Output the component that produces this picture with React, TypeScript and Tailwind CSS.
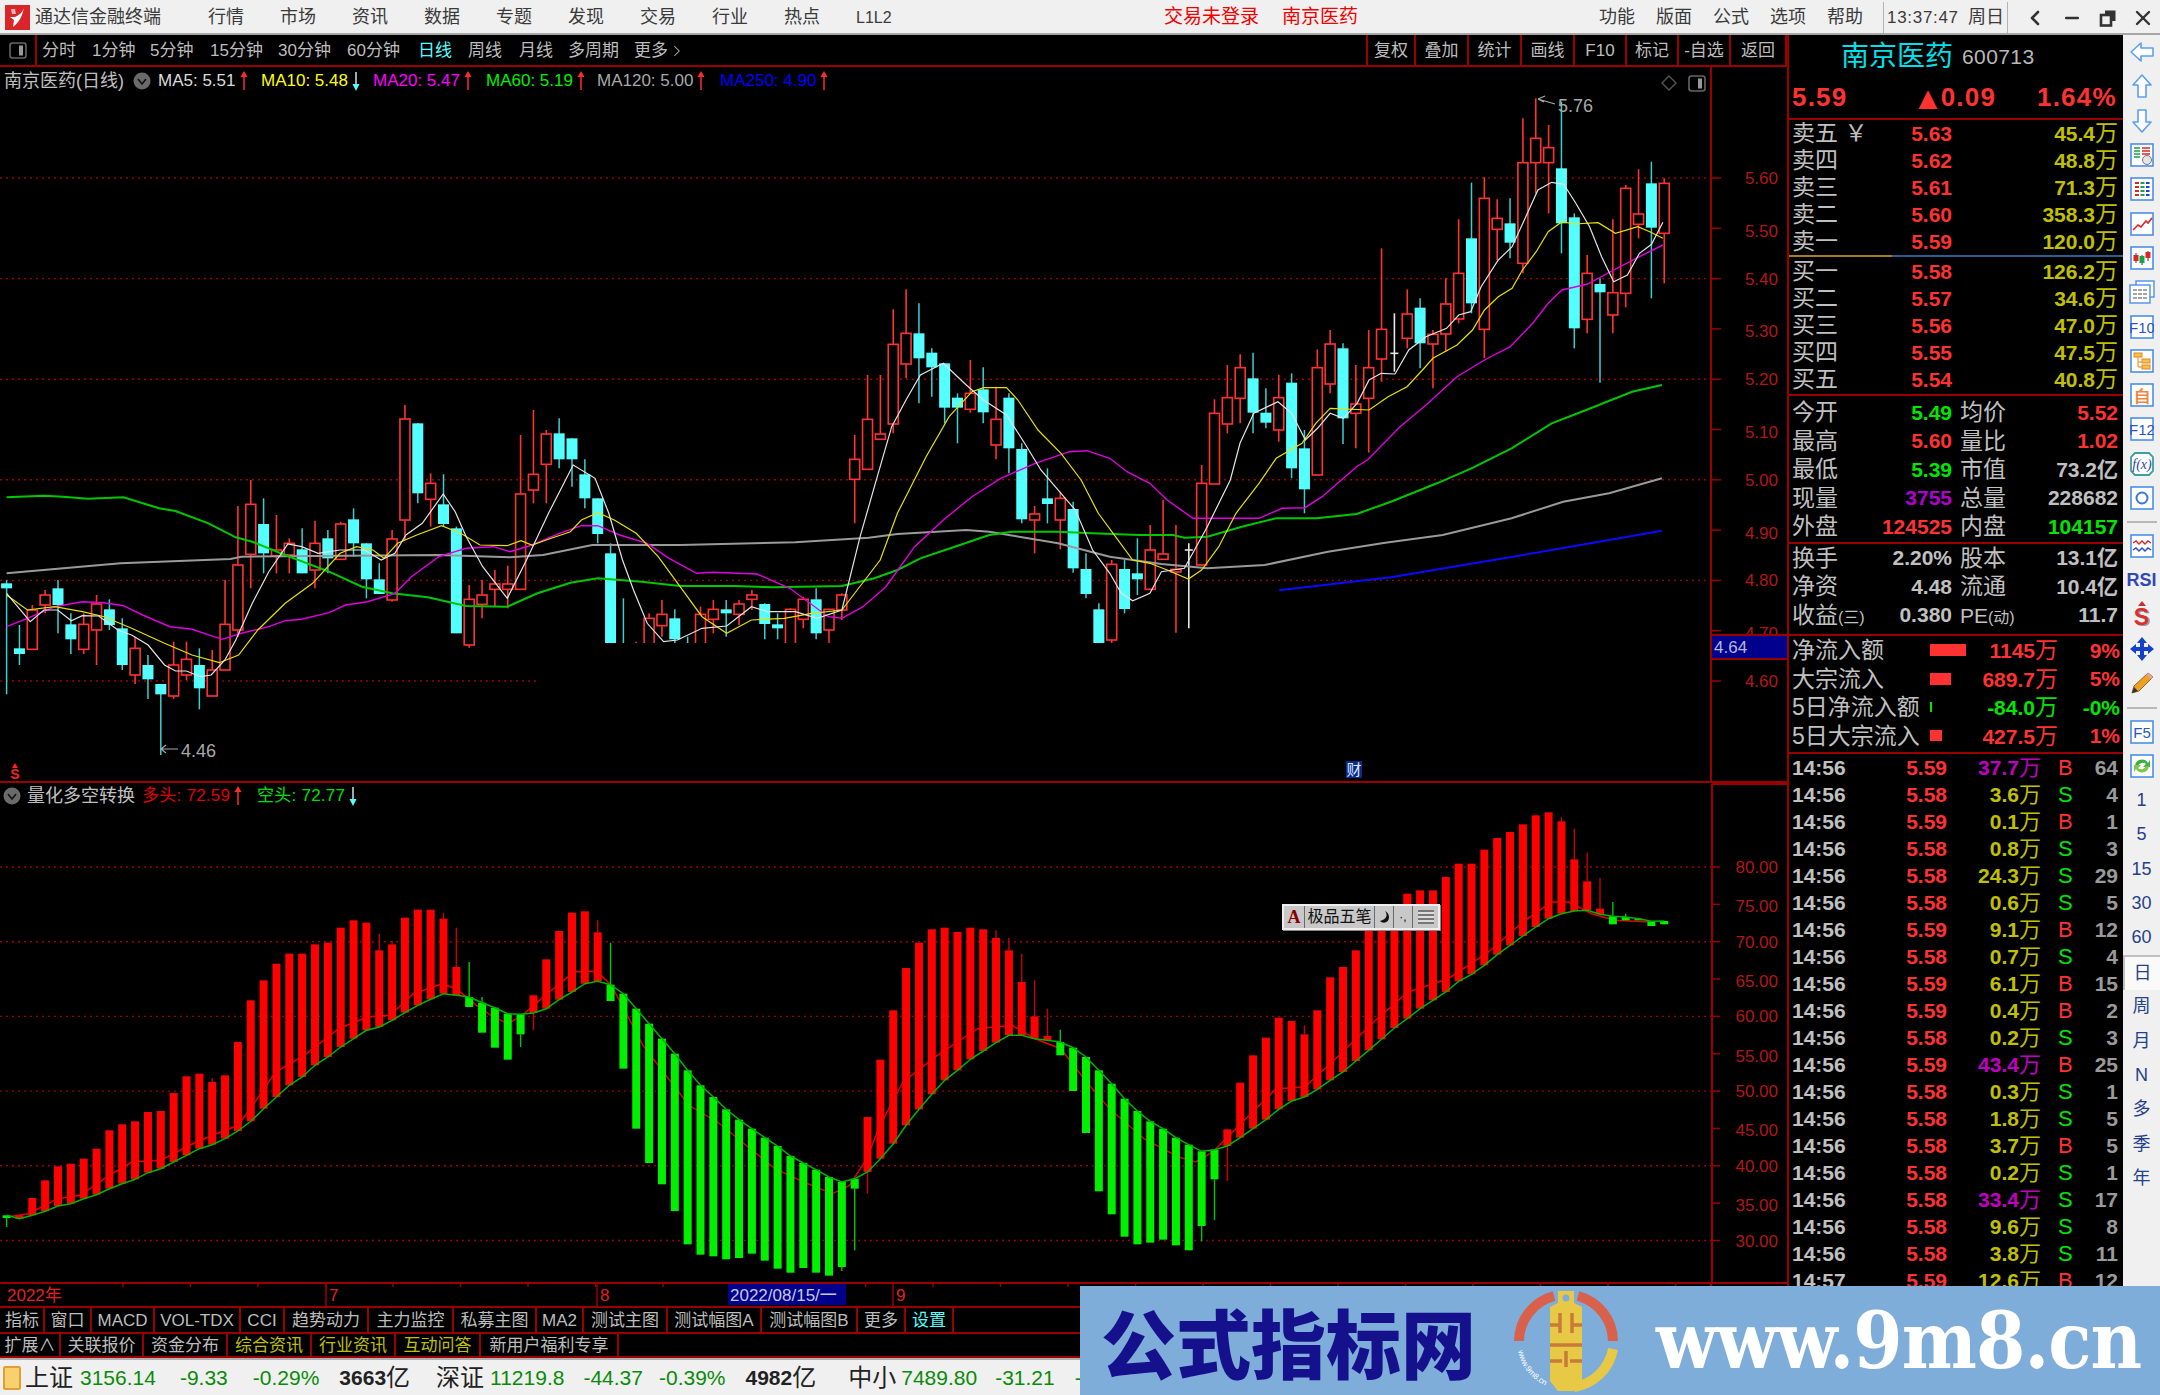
import { ChevronLeft, ChevronRight, Minus, X } from "lucide-react";
import type { ReactNode } from "react";

// zoom crops -> page coordinates
type Zoom = [number, number, number];
const Z7: Zoom = [0, 1568 / 860, 380];
const Z8: Zoom = [840, 1568 / 900, 260];
const Z9: Zoom = [1240, 1568 / 540, 60];
const Z10: Zoom = [0, 1568 / 900, 780];
const Z11: Zoom = [880, 1568 / 900, 780];

const line = (...parts: [Zoom, number[]][]) =>
  parts
    .map(([z, l]) => {
      const out: string[] = [];
      for (let i = 0; i < l.length; i += 2) {
        out.push(`${(z[0] + l[i] / z[1]).toFixed(1)},${(z[2] + l[i + 1] / 3).toFixed(1)}`);
      }
      return out.join(" ");
    })
    .join(" ");

const barX = (i: number) => 6.6 + 12.85 * i;

// [kind 1 up 0 down 2 doji, wick top, body top, body bottom, wick bottom]
const candlesA = [
  [0, 600, 610, 625, 943], [0, 735, 805, 822, 855], [1, 675, 690, 808, 808], [1, 630, 645, 675, 700], [0, 600, 625, 675, 760],
  [0, 700, 733, 778, 822], [1, 700, 733, 808, 822], [1, 645, 672, 750, 855], [0, 658, 688, 735, 750], [0, 715, 745, 855, 870],
  [1, 770, 805, 885, 912], [0, 825, 855, 898, 957], [0, 912, 912, 943, 1125], [1, 785, 855, 948, 957], [1, 785, 838, 885, 900],
  [0, 805, 855, 925, 988], [1, 810, 870, 948, 948], [1, 600, 733, 870, 870], [1, 378, 555, 750, 770], [1, 300, 373, 523, 625],
  [0, 355, 432, 520, 580], [1, 405, 510, 527, 580], [1, 475, 490, 525, 580], [0, 445, 508, 580, 580], [1, 422, 490, 570, 625],
  [0, 450, 475, 535, 580], [1, 425, 432, 538, 540], [0, 385, 418, 490, 530], [0, 490, 490, 598, 655], [0, 550, 598, 642, 640],
  [1, 450, 477, 660, 665], [1, 75, 117, 420, 480], [0, 130, 130, 340, 370], [1, 280, 310, 358, 440], [0, 283, 373, 432, 440],
  [0, 440, 445, 760, 760], [1, 615, 658, 795, 803], [1, 600, 645, 673, 715], [1, 570, 612, 628, 680], [1, 557, 612, 628, 685],
  [1, 165, 342, 628, 630], [1, 90, 283, 330, 370], [1, 150, 162, 253, 370], [0, 115, 160, 238, 265], [0, 175, 175, 238, 320],
  [0, 238, 283, 355, 385], [0, 355, 355, 462, 490], [0, 490, 520, 900, 900], [0, 655, 800, 880, 900], [1, 785, 800, 880, 900],
  [1, 700, 715, 800, 900], [1, 660, 703, 737, 770], [0, 688, 715, 778, 790], [0, 770, 790, 880, 900], [1, 680, 703, 800, 860],
  [1, 660, 688, 718, 760], [0, 660, 688, 700, 770], [1, 660, 672, 703, 735], [1, 630, 645, 658, 690], [0, 670, 672, 732, 778],
  [0, 700, 733, 745, 778], [1, 685, 688, 800, 800], [1, 650, 658, 718, 745], [0, 625, 658, 760, 778], [1, 690, 688, 750, 800],
  [1, 640, 645, 690, 720],
];
const candlesB = [
  [1, 525, 598, 658, 790], [1, 345, 478, 628, 630], [1, 345, 522, 538, 540], [1, 148, 253, 492, 520], [1, 88, 220, 312, 355],
  [0, 130, 220, 295, 430], [0, 265, 278, 322, 410], [0, 310, 310, 443, 490], [0, 400, 413, 443, 550], [1, 300, 400, 448, 458],
  [0, 322, 388, 457, 490], [1, 380, 478, 555, 598], [0, 400, 413, 565, 640], [0, 550, 567, 778, 790], [1, 738, 762, 780, 880],
  [0, 625, 715, 732, 790], [1, 695, 715, 780, 868], [0, 725, 747, 925, 938], [0, 880, 927, 1002, 1015], [0, 1030, 1048, 1240, 1240],
  [1, 900, 913, 1140, 1150], [0, 900, 927, 1047, 1060], [0, 835, 940, 958, 1005], [1, 795, 870, 988, 990], [1, 720, 882, 898, 900],
  [1, 795, 928, 936, 1118], [2, 850, 870, 870, 1105], [1, 615, 670, 915, 918], [1, 418, 460, 672, 672], [1, 315, 413, 492, 520],
  [1, 283, 323, 415, 490], [0, 278, 355, 458, 520], [0, 385, 458, 488, 505], [1, 345, 413, 510, 545], [0, 340, 368, 625, 655],
  [0, 510, 565, 688, 760], [1, 268, 323, 645, 645], [1, 210, 252, 372, 400], [0, 250, 265, 475, 552], [1, 315, 432, 460, 565],
  [1, 210, 323, 415, 578],
];
const candlesC = [
  [1, 565, 808, 897, 965], [2, 760, 880, 880, 935], [1, 688, 762, 835, 865], [0, 715, 743, 850, 925], [1, 810, 823, 852, 985],
  [1, 655, 732, 822, 875], [1, 478, 640, 777, 790], [0, 368, 535, 730, 760], [1, 352, 415, 808, 895], [1, 418, 475, 508, 600],
  [0, 415, 490, 548, 595], [1, 175, 308, 610, 640], [1, 115, 235, 308, 400], [1, 195, 263, 308, 460], [0, 125, 325, 490, 580],
  [0, 460, 472, 805, 865], [1, 585, 640, 778, 820], [0, 655, 672, 697, 968], [1, 478, 698, 765, 820], [1, 375, 385, 700, 742],
  [1, 328, 462, 493, 535], [0, 305, 370, 503, 715], [1, 355, 370, 520, 670],
];
const candles = [
  ...candlesA.map((c) => c.map((v, k) => (k ? 380 + v / 3 : v))),
  ...candlesB.map((c) => c.map((v, k) => (k ? 260 + v / 3 : v))),
  ...candlesC.map((c) => c.map((v, k) => (k ? 60 + v / 3 : v))),
];

const ma5 = line(
  [Z7, [12, 640, 55, 725, 80, 690, 105, 690, 130, 722, 150, 707, 180, 708, 215, 750, 240, 765, 270, 795, 300, 855, 320, 873, 340, 873, 365, 890, 385, 885, 410, 840, 430, 780, 460, 670, 490, 575, 525, 492, 550, 500, 580, 520, 620, 510, 665, 510, 695, 540, 720, 520, 740, 465, 770, 430, 808, 342, 830, 395, 850, 470, 880, 560, 925, 655, 960, 540, 1000, 400, 1045, 255, 1085, 295, 1110, 400, 1135, 540, 1155, 630, 1180, 730, 1210, 785, 1235, 780, 1280, 745, 1325, 738, 1370, 680, 1400, 695, 1450, 695, 1490, 715, 1535, 690]],
  [Z8, [35, 830, 60, 680, 90, 500, 115, 420, 140, 345, 180, 310, 220, 375, 250, 420, 290, 465, 320, 545, 350, 630, 385, 700, 410, 750, 440, 870, 470, 940, 490, 1000, 510, 1022, 540, 1000, 560, 935, 600, 925, 640, 800, 680, 660]],
  [Z9, [0, 1150, 40, 1060, 110, 1025, 150, 1060, 190, 1140, 225, 1105, 262, 1060, 300, 1075, 340, 1030, 375, 960, 410, 940, 450, 942, 490, 870, 540, 830, 600, 805, 635, 765, 670, 755, 700, 680, 750, 600, 790, 560, 830, 470, 865, 390, 905, 367, 940, 373, 975, 430, 1015, 500, 1050, 590, 1085, 665, 1125, 645, 1160, 580, 1195, 553, 1228, 487]],
);
const ma10 = line(
  [Z7, [12, 645, 50, 690, 100, 680, 150, 695, 190, 710, 240, 745, 300, 790, 350, 825, 400, 848, 435, 825, 470, 750, 520, 670, 570, 610, 620, 520, 650, 500, 680, 510, 700, 535, 725, 490, 760, 465, 805, 437, 840, 460, 875, 495, 925, 497, 950, 482, 970, 495, 1005, 475, 1040, 455, 1060, 420, 1090, 398, 1120, 420, 1160, 460, 1200, 530, 1240, 620, 1280, 710, 1325, 760, 1370, 720, 1430, 715, 1480, 700, 1535, 690]],
  [Z8, [30, 990, 70, 900, 100, 760, 150, 590, 190, 470, 230, 395, 250, 383, 290, 383, 310, 420, 345, 510, 385, 580, 420, 660, 450, 760, 480, 830, 510, 900, 540, 910, 570, 930, 607, 957, 630, 930, 660, 860, 690, 760, 730, 670]],
  [Z9, [105, 1195, 180, 1150, 220, 1090, 262, 1045, 375, 1050, 430, 1010, 485, 980, 530, 930, 560, 895, 630, 855, 675, 810, 710, 750, 750, 710, 790, 685, 820, 630, 860, 575, 895, 515, 935, 485, 970, 492, 1040, 488, 1090, 520, 1155, 500, 1190, 515, 1228, 535]],
);
const ma20 = line(
  [Z7, [12, 740, 50, 715, 100, 680, 150, 665, 190, 668, 225, 677, 260, 705, 310, 740, 350, 748, 405, 778, 440, 760, 490, 740, 520, 722, 550, 718, 600, 698, 630, 675, 670, 665, 720, 640, 750, 590, 800, 530, 850, 505, 900, 500, 930, 515, 970, 495, 1020, 460, 1060, 437, 1090, 437, 1130, 465, 1180, 490, 1220, 535, 1270, 580, 1300, 577, 1380, 582, 1440, 625, 1510, 710, 1535, 715]],
  [Z8, [40, 1040, 80, 980, 130, 860, 180, 780, 230, 710, 280, 655, 340, 610, 400, 575, 430, 572, 470, 595, 500, 635, 540, 670, 570, 720, 615, 775, 730, 775, 770, 745, 810, 743, 840, 710, 900, 620]],
  [Z9, [370, 1200, 465, 1100, 540, 1035, 630, 950, 710, 900, 785, 860, 850, 790, 895, 730, 935, 690, 1010, 672, 1085, 630, 1156, 592, 1228, 555]],
);
const ma60 = line(
  [Z7, [12, 352, 80, 347, 115, 350, 160, 356, 225, 352, 290, 385, 320, 393, 380, 430, 430, 472, 460, 485, 520, 525, 600, 575, 660, 620, 715, 640, 780, 652, 850, 678, 925, 680, 980, 640, 1040, 608, 1090, 595, 1170, 605, 1240, 618, 1340, 618, 1410, 622, 1535, 618]],
  [Z8, [60, 955, 100, 930, 140, 895, 200, 860, 260, 825, 300, 815, 380, 815, 440, 820, 520, 825, 580, 825, 600, 833, 640, 830, 700, 800, 760, 775, 830, 775, 900, 762, 960, 725, 1040, 670, 1100, 625, 1170, 565, 1240, 490, 1300, 450, 1380, 395, 1432, 375]],
);
const ma120 = line(
  [Z7, [12, 580, 100, 567, 220, 550, 420, 537, 440, 530, 800, 525, 930, 532, 990, 525, 1080, 495, 1240, 495, 1450, 487]],
  [Z8, [50, 833, 100, 822, 220, 810, 260, 815, 380, 850, 470, 890, 560, 912, 640, 925, 740, 915, 850, 875, 950, 848, 1050, 825, 1170, 775, 1260, 725, 1340, 700, 1432, 655]],
);
const ma250 = line([Z8, [765, 991, 960, 952, 1180, 888, 1300, 852, 1432, 812]]);

// [1 red 0 green, top, bottom, wick end or 0]
const bars = [
  [0, 1300, 1308, 1335], [1, 1300, 1310, 0], [1, 1248, 1300, 0], [1, 1195, 1288, 0], [1, 1153, 1272, 0], [1, 1145, 1265, 0], [1, 1130, 1250, 0], [1, 1100, 1238, 0],
  [1, 1045, 1220, 0], [1, 1027, 1205, 0], [1, 1018, 1192, 0], [1, 990, 1172, 0], [1, 987, 1160, 0], [1, 933, 1140, 0], [1, 883, 1120, 0], [1, 875, 1100, 0],
  [1, 900, 1088, 888], [1, 880, 1070, 0], [1, 780, 1047, 0], [1, 655, 1018, 0], [1, 595, 980, 0], [1, 545, 945, 0], [1, 515, 910, 0], [1, 515, 885, 0],
  [1, 487, 850, 0], [1, 482, 825, 0], [1, 437, 795, 0], [1, 415, 770, 0], [1, 422, 745, 432], [1, 505, 735, 455], [1, 487, 715, 478], [1, 407, 692, 0],
  [1, 383, 670, 0], [1, 383, 652, 0], [1, 410, 635, 392], [1, 555, 640, 437], [0, 645, 675, 540], [0, 662, 752, 645], [0, 677, 797, 0], [0, 695, 833, 0],
  [0, 697, 757, 795], [1, 640, 693, 745], [1, 532, 680, 0], [1, 447, 653, 0], [1, 392, 630, 0], [1, 388, 605, 0], [1, 451, 598, 415], [0, 608, 657, 482],
  [0, 635, 860, 0], [0, 680, 1040, 0], [0, 725, 1143, 0], [0, 770, 1207, 0], [0, 815, 1287, 0], [0, 865, 1387, 0], [0, 910, 1418, 0], [0, 945, 1423, 0],
  [0, 982, 1432, 0], [0, 1013, 1428, 0], [0, 1040, 1415, 0], [0, 1067, 1436, 0], [0, 1092, 1460, 0], [0, 1122, 1472, 0], [0, 1143, 1458, 0], [0, 1163, 1472, 0],
  [0, 1185, 1481, 0], [0, 1200, 1455, 1467], [0, 1190, 1220, 1405], [1, 1005, 1170, 1235], [1, 833, 1130, 0], [1, 685, 1085, 0], [1, 558, 1030, 0], [1, 482, 982, 0],
  [1, 442, 937, 0], [1, 437, 895, 0], [1, 450, 865, 0], [1, 437, 832, 0], [1, 442, 807, 0], [1, 468, 782, 445], [1, 505, 760, 468], [1, 600, 760, 515],
  [1, 703, 770, 595], [1, 762, 775, 680], [0, 780, 820, 743], [0, 797, 927, 0], [0, 825, 1053, 0], [0, 865, 1228, 0], [0, 905, 1297, 0], [0, 950, 1364, 0],
  [0, 987, 1387, 0], [0, 1018, 1382, 0], [0, 1040, 1373, 0], [0, 1067, 1390, 0], [0, 1088, 1405, 0], [0, 1108, 1332, 1378], [0, 1103, 1192, 1315], [1, 1042, 1092, 1197],
  [1, 902, 1067, 0], [1, 820, 1040, 0], [1, 767, 1013, 0], [1, 707, 982, 0], [1, 717, 957, 0], [1, 757, 945, 730], [1, 685, 922, 0], [1, 586, 895, 0],
  [1, 555, 870, 0], [1, 505, 837, 0], [1, 445, 805, 0], [1, 445, 772, 0], [1, 445, 738, 0], [1, 335, 710, 0], [1, 325, 680, 0], [1, 325, 655, 0],
  [1, 285, 630, 0], [1, 245, 598, 0], [1, 245, 577, 0], [1, 203, 550, 0], [1, 168, 518, 0], [1, 150, 490, 0], [1, 127, 462, 0], [1, 100, 435, 0],
  [1, 91, 410, 0], [1, 118, 395, 105], [1, 232, 387, 140], [1, 298, 385, 212], [1, 380, 397, 288], [0, 403, 427, 360], [0, 405, 415, 395], [0, 410, 415, 0],
  [0, 418, 432, 0], [0, 417, 427, 0],
];
const subY = (v: number) => 780 + v / 3;
const greenLine = bars.map((b, i) => `${barX(i).toFixed(1)},${subY(b[0] ? b[2] : b[1]).toFixed(1)}`).join(" ");
const redLine = line(
  [Z10, [12, 1305, 50, 1295, 100, 1250, 140, 1240, 190, 1180, 230, 1140, 280, 1135, 330, 1090, 370, 1060, 415, 1030, 440, 970, 480, 870, 530, 820, 590, 740, 640, 705, 680, 700, 720, 635, 770, 605, 795, 620, 830, 670, 860, 705, 885, 725, 910, 700, 950, 640, 1000, 570, 1040, 568, 1065, 610, 1090, 690, 1120, 790, 1160, 880, 1200, 970, 1250, 1020, 1300, 1090, 1350, 1160, 1400, 1200, 1450, 1235, 1480, 1210, 1510, 1130]],
  [Z11, [0, 1030, 40, 900, 100, 820, 170, 740, 230, 730, 270, 770, 315, 800, 360, 900, 400, 980, 460, 1070, 520, 1125, 550, 1140, 580, 1110, 620, 1040, 690, 920, 740, 915, 800, 820, 860, 720, 920, 630, 990, 590, 1060, 510, 1120, 420, 1170, 360, 1200, 360, 1240, 395, 1280, 415, 1340, 420]],
);

const NUM = "font-['Liberation_Sans',sans-serif]";
const AXIS_RED = "#b01818";
const LINE_RED = "#9a0000";

function Arrow({ up }: { up: boolean }) {
  return (
    <svg width="8" height="22" viewBox="0 0 8 22" className="shrink-0">
      {up ? (
        <>
          <line x1="4" y1="5" x2="4" y2="20" stroke="#ff2a2a" strokeWidth="1.5" />
          <path d="M0.5 7 L4 1 L7.5 7 Z" fill="#ff2a2a" />
        </>
      ) : (
        <>
          <line x1="4" y1="2" x2="4" y2="16" stroke="#c8e8e8" strokeWidth="1.5" />
          <path d="M0.5 14 L4 21 L7.5 14 Z" fill="#54ffff" />
        </>
      )}
    </svg>
  );
}

function RoundChevron() {
  return (
    <svg width="18" height="18" viewBox="0 0 18 18" className="shrink-0">
      <circle cx="9" cy="9" r="8.5" fill="#6a6a6a" />
      <path d="M5 7 L9 12 L13 7" fill="none" stroke="#111" strokeWidth="1.6" />
    </svg>
  );
}

function PanelToggle() {
  return (
    <svg width="18" height="17" viewBox="0 0 18 17">
      <rect x="1" y="1" width="16" height="15" rx="2.5" fill="none" stroke="#666" strokeWidth="1.6" />
      <rect x="10" y="3.5" width="4" height="10" fill="#999" />
    </svg>
  );
}

function TitleBar() {
  const menu = ["行情", "市场", "资讯", "数据", "专题", "发现", "交易", "行业", "热点"];
  return (
    <div className="flex h-[35px] shrink-0 items-center whitespace-nowrap border-b-2 border-[#a6a6a6] bg-[#f0f0f0] pt-[2px] text-[18px] text-[#3a3a3a]">
      <svg width="25" height="25" viewBox="0 0 25 25" className="ml-[5px] shrink-0">
        <rect width="25" height="25" fill="#d8262a" />
        <path d="M19 3 C17 8 14 10 10 12 L5 12 L9 15 L8 22 C12 19 15 15 17 10 Z" fill="#fff" />
        <path d="M6 4 L10 4 L11 9 L7 9 Z" fill="#f6b3b3" />
      </svg>
      <span className="ml-[5px] w-[126px] shrink-0">通达信金融终端</span>
      <div className="ml-[47px] flex shrink-0 gap-[36px]">
        {menu.map((m) => (
          <span key={m} className="w-[36px]">
            {m}
          </span>
        ))}
        <span className={`w-[36px] text-[16px] leading-[27px] ${NUM}`}>L1L2</span>
      </div>
      <span className="ml-[272px] w-[95px] shrink-0 text-[19px] text-[#f00000]">交易未登录</span>
      <span className="ml-[23px] w-[77px] shrink-0 text-[19px] text-[#f00000]">南京医药</span>
      <div className="ml-[240px] flex shrink-0 gap-[21px]">
        {["功能", "版面", "公式", "选项", "帮助"].map((m) => (
          <span key={m} className="w-[36px]">
            {m}
          </span>
        ))}
      </div>
      <div className="ml-[20px] flex h-full w-[125px] shrink-0 items-center border-x border-[#b4b4b4] pl-[3px]">
        <span className={`w-[81px] shrink-0 text-[17px] tracking-[0.7px] ${NUM}`}>13:37:47</span>
        <span className="shrink-0">周日</span>
      </div>
      <div className="ml-[15px] flex shrink-0 items-center text-[#333]">
        <ChevronLeft size={24} strokeWidth={2.6} />
        <Minus size={20} strokeWidth={3} className="ml-[15px]" />
        <svg width="18" height="18" viewBox="0 0 18 18" className="ml-[17px]">
          <path d="M6 1.5 H16.5 V12 H13 V5 H6 Z" fill="#333" />
          <rect x="2" y="6" width="10" height="10.5" fill="none" stroke="#333" strokeWidth="2.6" />
        </svg>
        <X size={24} strokeWidth={2.4} className="ml-[14px]" />
      </div>
    </div>
  );
}

function PeriodTabs() {
  const left: [string, string][] = [
    ["分时", "w-[50px]"],
    ["1分钟", "w-[58px]"],
    ["5分钟", "w-[60px]"],
    ["15分钟", "w-[68px]"],
    ["30分钟", "w-[69px]"],
    ["60分钟", "w-[71px]"],
    ["日线", "w-[50px] text-[#54ffff]"],
    ["周线", "w-[51px]"],
    ["月线", "w-[49px]"],
    ["多周期", "w-[66px]"],
  ];
  const right: [string, string][] = [
    ["复权", "w-[50px]"],
    ["叠加", "w-[53px]"],
    ["统计", "w-[53px]"],
    ["画线", "w-[53px]"],
    ["F10", "w-[52px]"],
    ["标记", "w-[52px]"],
    ["-自选", "w-[52px]"],
    ["返回", "w-[56px] border-r-0"],
  ];
  return (
    <div className="flex h-[32px] shrink-0 border-b-2 border-[#9a0000] text-[17px] text-[#bdbdbd]">
      <div className="flex w-[37px] items-center justify-center border-r-2 border-[#9a0000]">
        <PanelToggle />
      </div>
      <div className="ml-[5px] flex items-center pt-[2px]">
        {left.map(([t, c]) => (
          <span key={t} className={c}>
            {t}
          </span>
        ))}
        <span className="flex items-center">
          更多
          <ChevronRight size={18} strokeWidth={1.4} />
        </span>
      </div>
      <div className="ml-auto flex">
        {right.map(([t, c]) => (
          <span key={t} className={`flex items-center justify-center border-r-2 border-[#9a0000] pt-[1px] first:border-l-2 ${c}`}>
            {t}
          </span>
        ))}
      </div>
    </div>
  );
}

function MainChart() {
  const grid = [178, 278.6, 379.2, 479.8, 580.4, 681];
  const ticks = Array.from({ length: 11 }, (_, i) => 178 + i * 50.3);
  const labels = ["5.60", "5.50", "5.40", "5.30", "5.20", "5.10", "5.00", "4.90", "4.80", "4.70", "4.60"];
  return (
    <svg width="1787" height="714" viewBox="0 67 1787 714" className="block">
      {grid.map((y) => (
        <line key={y} x1="0" y1={y} x2="1711" y2={y} stroke="#a00000" strokeWidth="1.4" strokeDasharray="2 4" />
      ))}
      {candles.map((c, i) => {
        const x = barX(i);
        if (c[0] === 2) {
          return (
            <g key={i} stroke="#e8e8e8" strokeWidth="1.6">
              <line x1={x} y1={c[1]} x2={x} y2={c[4]} />
              <line x1={x - 4} y1={c[2]} x2={x + 4} y2={c[2]} />
            </g>
          );
        }
        if (c[0] === 1) {
          return (
            <g key={i} stroke="#ff3232" strokeWidth="1.6" fill="#000">
              <line x1={x} y1={c[1]} x2={x} y2={c[2]} />
              <line x1={x} y1={c[3]} x2={x} y2={c[4]} />
              <rect x={x - 5} y={c[2]} width="10" height={Math.max(c[3] - c[2], 1)} />
            </g>
          );
        }
        return (
          <g key={i}>
            <line x1={x} y1={c[1]} x2={x} y2={c[4]} stroke="#3ccfcf" strokeWidth="1.5" />
            <rect x={x - 5.5} y={c[2]} width="11" height={Math.max(c[3] - c[2], 1)} fill="#54ffff" />
          </g>
        );
      })}
      <polyline points={ma120} fill="none" stroke="#9a9a9a" strokeWidth="2" />
      <polyline points={ma250} fill="none" stroke="#0a0aff" strokeWidth="2" />
      <polyline points={ma60} fill="none" stroke="#00c800" strokeWidth="2" />
      <polyline points={ma20} fill="none" stroke="#e000e0" strokeWidth="1.4" />
      <polyline points={ma10} fill="none" stroke="#e8e000" strokeWidth="1.2" />
      <polyline points={ma5} fill="none" stroke="#e4e4e4" strokeWidth="1.2" />
      {/* the lower part of the plot is blanked out in the reference */}
      <rect x="537" y="643" width="1170" height="135" fill="#000" />

      <path d="M1538 99 L1545 96 M1538 99 L1544 102 M1538 99 L1555 104" stroke="#aaa" strokeWidth="1.2" fill="none" />
      <text x="1558" y="112" fontSize="18" fill="#a8a8a8" className={NUM}>
        5.76
      </text>
      <path d="M161 749 L166 745 M161 749 L166 753 M161 749 L178 749" stroke="#aaa" strokeWidth="1.2" fill="none" />
      <text x="181" y="757" fontSize="18" fill="#a8a8a8" className={NUM}>
        4.46
      </text>
      <path d="M15 763 L18 768 L12 768 Z" fill="#ff2020" />
      <text x="15" y="779" fontSize="14" fontWeight="700" fill="#ff2020" textAnchor="middle" className={NUM}>
        S
      </text>
      <rect x="1346" y="761" width="16" height="17" fill="#0a2a8a" />
      <text x="1354" y="775" fontSize="15" fill="#dfe8ff" textAnchor="middle">
        财
      </text>

      <line x1="1711" y1="67" x2="1711" y2="781" stroke={LINE_RED} strokeWidth="2" />
      {ticks.map((y) => (
        <line key={y} x1="1711" y1={y} x2="1721" y2={y} stroke={LINE_RED} strokeWidth="1.5" />
      ))}
      {labels.map((l, i) => (
        <text key={l} x="1778" y={ticks[i] + 6 + (i % 2 ? 2.5 : 0)} fontSize="17" fill={AXIS_RED} textAnchor="end" className={NUM}>
          {l}
        </text>
      ))}
      <rect x="1712" y="635" width="75" height="24" fill="#00008c" />
      <line x1="1712" y1="635" x2="1787" y2="635" stroke={LINE_RED} strokeWidth="2" />
      <line x1="1712" y1="659" x2="1787" y2="659" stroke={LINE_RED} strokeWidth="2" />
      <text x="1714" y="653" fontSize="17" fill="#b8b8d8" className={NUM}>
        4.64
      </text>
    </svg>
  );
}

function SubChart() {
  const grid = [865, 939.7, 1014.4, 1089.1, 1163.8, 1238.5];
  const ticks = Array.from({ length: 11 }, (_, i) => 865 + i * 37.35);
  const labels = ["80.00", "75.00", "70.00", "65.00", "60.00", "55.00", "50.00", "45.00", "40.00", "35.00", "30.00"];
  return (
    <svg width="1787" height="501" viewBox="0 781 1787 501" className="block">
      {grid.map((y) => (
        <line key={y} x1="0" y1={y} x2="1711" y2={y} stroke="#a00000" strokeWidth="1.4" strokeDasharray="2 4" />
      ))}
      <polyline points={redLine} fill="none" stroke="#e00000" strokeWidth="1.5" />
      {bars.map((b, i) => {
        const x = barX(i);
        const color = b[0] ? "#ff0000" : "#00f000";
        const top = subY(b[1]);
        const bottom = subY(b[2]);
        return (
          <g key={i}>
            {b[3] > 0 && (
              <line
                x1={x}
                x2={x}
                y1={b[3] < b[1] ? subY(b[3]) : bottom}
                y2={b[3] < b[1] ? top : subY(b[3])}
                stroke={b[0] ? "#c80000" : "#00c800"}
                strokeWidth="1.4"
              />
            )}
            <rect x={x - 4} y={top} width="8" height={bottom - top} fill={color} />
          </g>
        );
      })}
      <polyline points={greenLine} fill="none" stroke="#00b400" strokeWidth="1.5" />
      <line x1="1712" y1="782" x2="1712" y2="1282" stroke={LINE_RED} strokeWidth="2" />
      <line x1="1712" y1="782" x2="1787" y2="782" stroke={LINE_RED} strokeWidth="2" />
      {ticks.map((y) => (
        <line key={y} x1="1712" y1={y} x2="1720" y2={y} stroke={LINE_RED} strokeWidth="1.5" />
      ))}
      {labels.map((l, i) => (
        <text key={l} x="1778" y={Math.round(ticks[i]) + 6 + (i % 2 ? 2 : 0)} fontSize="17" fill={AXIS_RED} textAnchor="end" className={NUM}>
          {l}
        </text>
      ))}
    </svg>
  );
}

function DateAxis() {
  const ticks = Array.from({ length: 24 }, (_, i) => 123 + i * 67.5);
  const marks: [number, string][] = [
    [326, "7"],
    [597, "8"],
    [893, "9"],
  ];
  return (
    <svg width="1787" height="24" viewBox="0 1282 1787 24" className="block">
      {ticks.map((x) => (
        <line key={x} x1={x} y1="1283" x2={x} y2="1287" stroke={LINE_RED} strokeWidth="1.5" />
      ))}
      <text x="7" y="1301" fontSize="17" fill="#e02020" className="font-['Liberation_Sans','Noto_Sans_CJK_SC',sans-serif]">
        2022年
      </text>
      {marks.map(([x, t]) => (
        <g key={t}>
          <line x1={x} y1="1282" x2={x} y2="1306" stroke={LINE_RED} strokeWidth="1.5" />
          <text x={x + 3} y="1301" fontSize="17" fill="#e02020" className={NUM}>
            {t}
          </text>
        </g>
      ))}
      <rect x="728" y="1284" width="118" height="21" fill="#00008c" />
      <text x="730" y="1301" fontSize="17" fill="#c8c8e0" className="font-['Liberation_Sans','Noto_Sans_CJK_SC',sans-serif]">
        2022/08/15/一
      </text>
      <line x1="0" y1="1283" x2="1787" y2="1283" stroke={LINE_RED} strokeWidth="2" />
      <line x1="1711" y1="1282" x2="1711" y2="1306" stroke={LINE_RED} strokeWidth="2" />
    </svg>
  );
}

function BottomTabs() {
  const row1: [string, string][] = [
    ["指标", "w-[44px]"],
    ["窗口", "w-[47px]"],
    ["MACD", "w-[63px]"],
    ["VOL-TDX", "w-[86px]"],
    ["CCI", "w-[44px]"],
    ["趋势动力", "w-[84px]"],
    ["主力监控", "w-[85px]"],
    ["私募主图", "w-[83px]"],
    ["MA2", "w-[47px]"],
    ["测试主图", "w-[84px]"],
    ["测试幅图A", "w-[94px]"],
    ["测试幅图B", "w-[96px]"],
    ["更多", "w-[48px]"],
    ["设置", "w-[48px] text-[#54ffff]"],
  ];
  const row2: [string, string][] = [
    ["扩展∧", "w-[60px]"],
    ["关联报价", "w-[83px]"],
    ["资金分布", "w-[84px]"],
    ["综合资讯", "w-[84px] text-[#c0c000]"],
    ["行业资讯", "w-[84px] text-[#c0c000]"],
    ["互动问答", "w-[85px] text-[#c0c000]"],
    ["新用户福利专享", "w-[138px]"],
  ];
  return (
    <div className="text-[17px] text-[#bdbdbd]">
      <div className="flex h-[26px] border-t-2 border-[#9a0000] pl-[1px]">
        {row1.map(([t, c]) => (
          <span key={t} className={`flex items-center justify-center border-r-2 border-[#9a0000] pt-[1px] ${c}`}>
            {t}
          </span>
        ))}
      </div>
      <div className="flex h-[26px] border-y-2 border-[#9a0000] pl-[1px]">
        {row2.map(([t, c]) => (
          <span key={t} className={`flex items-center justify-center border-r-2 border-[#9a0000] pt-[2px] ${c}`}>
            {t}
          </span>
        ))}
      </div>
    </div>
  );
}

function Quote({ label, price, vol }: { label: string; price: string; vol: string }) {
  return (
    <div className="flex h-[27px] shrink-0 items-center pl-[3px]">
      <span className="w-[80px] text-[23px] text-[#c0c0c0]">{label}</span>
      <span className="w-[80px] text-right text-[21px] font-bold text-[#ff3232]">{price}</span>
      <span className="flex-1 pr-[5px] text-right text-[21px] font-bold text-[#c0c000]">
        {vol}
        <span className="text-[23px] font-normal">万</span>
      </span>
    </div>
  );
}

function Stat({ l, v, c, l2, v2, c2 }: { l: ReactNode; v: string; c: string; l2: ReactNode; v2: string; c2: string }) {
  return (
    <div className="flex h-[28.5px] shrink-0 items-center pl-[3px]">
      <span className="w-[80px] whitespace-nowrap text-[23px] text-[#c0c0c0]">{l}</span>
      <span className={`w-[80px] text-right text-[21px] font-bold ${c}`}>{v}</span>
      <span className="ml-[8px] w-[64px] whitespace-nowrap text-[23px] text-[#c0c0c0]">{l2}</span>
      <span className={`flex-1 whitespace-nowrap pr-[5px] text-right text-[21px] font-bold ${c2}`}>{v2}</span>
    </div>
  );
}

function FlowRow({ l, bar, v, p, c }: { l: string; bar: string; v: string; p: string; c: string }) {
  return (
    <div className="flex h-[28.5px] shrink-0 items-center pl-[3px]">
      <span className="w-[138px] shrink-0 whitespace-nowrap text-[23px] text-[#c0c0c0]">{l}</span>
      <span className="w-[50px] shrink-0">
        <span className={`block ${bar}`} />
      </span>
      <span className={`w-[78px] text-right text-[21px] font-bold ${c}`}>
        {v}
        <span className="text-[23px] font-normal">万</span>
      </span>
      <span className={`flex-1 pr-[3px] text-right text-[21px] font-bold ${c}`}>{p}</span>
    </div>
  );
}

const trades: [string, string, string, string, string, string][] = [
  ["14:56", "5.59", "37.7", "text-[#c000c0]", "B", "64"],
  ["14:56", "5.58", "3.6", "text-[#c0c000]", "S", "4"],
  ["14:56", "5.59", "0.1", "text-[#c0c000]", "B", "1"],
  ["14:56", "5.58", "0.8", "text-[#c0c000]", "S", "3"],
  ["14:56", "5.58", "24.3", "text-[#c0c000]", "S", "29"],
  ["14:56", "5.58", "0.6", "text-[#c0c000]", "S", "5"],
  ["14:56", "5.59", "9.1", "text-[#c0c000]", "B", "12"],
  ["14:56", "5.58", "0.7", "text-[#c0c000]", "S", "4"],
  ["14:56", "5.59", "6.1", "text-[#c0c000]", "B", "15"],
  ["14:56", "5.59", "0.4", "text-[#c0c000]", "B", "2"],
  ["14:56", "5.58", "0.2", "text-[#c0c000]", "S", "3"],
  ["14:56", "5.59", "43.4", "text-[#c000c0]", "B", "25"],
  ["14:56", "5.58", "0.3", "text-[#c0c000]", "S", "1"],
  ["14:56", "5.58", "1.8", "text-[#c0c000]", "S", "5"],
  ["14:56", "5.58", "3.7", "text-[#c0c000]", "B", "5"],
  ["14:56", "5.58", "0.2", "text-[#c0c000]", "S", "1"],
  ["14:56", "5.58", "33.4", "text-[#c000c0]", "S", "17"],
  ["14:56", "5.58", "9.6", "text-[#c0c000]", "S", "8"],
  ["14:56", "5.58", "3.8", "text-[#c0c000]", "S", "11"],
  ["14:57", "5.59", "12.6", "text-[#c0c000]", "B", "12"],
];

function QuotePanel() {
  return (
    <div className="flex w-[336px] flex-col overflow-hidden border-l-2 border-[#9a0000]">
      <div className="flex h-[40px] shrink-0 items-center pl-[52px] pt-[3px]">
        <span className="text-[28px] leading-none text-[#00e0e8]">南京医药</span>
        <span className="ml-[9px] text-[21px] tracking-[0.4px] text-[#b8b8b8]">600713</span>
      </div>
      <div className="flex h-[45px] shrink-0 items-center border-b-2 border-[#9a0000] pl-[3px] pt-[2px] text-[26px] font-bold tracking-[1.2px] text-[#ff3232]">
        <span className="w-[120px]">5.59</span>
        <span className="flex w-[125px] items-center">
          <span className="text-[32px] leading-none tracking-[-3px]">▲</span>
          0.09
        </span>
        <span>1.64%</span>
      </div>
      <Quote label="卖五 ￥" price="5.63" vol="45.4" />
      <Quote label="卖四" price="5.62" vol="48.8" />
      <Quote label="卖三" price="5.61" vol="71.3" />
      <Quote label="卖二" price="5.60" vol="358.3" />
      <Quote label="卖一" price="5.59" vol="120.0" />
      <div className="flex h-[2px] shrink-0">
        <span className="w-[103px] bg-[#a87a2c]" />
        <span className="flex-1 bg-[#2a6090]" />
      </div>
      <div className="h-[1px] shrink-0" />
      <Quote label="买一" price="5.58" vol="126.2" />
      <Quote label="买二" price="5.57" vol="34.6" />
      <Quote label="买三" price="5.56" vol="47.0" />
      <Quote label="买四" price="5.55" vol="47.5" />
      <Quote label="买五" price="5.54" vol="40.8" />
      <div className="mb-[2px] mt-[1px] h-[2px] shrink-0 bg-[#9a0000]" />
      <Stat l="今开" v="5.49" c="text-[#00e600]" l2="均价" v2="5.52" c2="text-[#ff3232]" />
      <Stat l="最高" v="5.60" c="text-[#ff3232]" l2="量比" v2="1.02" c2="text-[#ff3232]" />
      <Stat l="最低" v="5.39" c="text-[#00e600]" l2="市值" v2="73.2亿" c2="text-[#c0c0c0]" />
      <Stat l="现量" v="3755" c="text-[#b000d0]" l2="总量" v2="228682" c2="text-[#c0c0c0]" />
      <Stat l="外盘" v="124525" c="text-[#ff3232]" l2="内盘" v2="104157" c2="text-[#00e600]" />
      <div className="mt-[1px] h-[2px] shrink-0 bg-[#9a0000]" />
      <Stat l="换手" v="2.20%" c="text-[#c0c0c0]" l2="股本" v2="13.1亿" c2="text-[#c0c0c0]" />
      <Stat l="净资" v="4.48" c="text-[#c0c0c0]" l2="流通" v2="10.4亿" c2="text-[#c0c0c0]" />
      <Stat
        l={
          <>
            收益<span className="text-[16px]">(三)</span>
          </>
        }
        v="0.380"
        c="text-[#c0c0c0]"
        l2={
          <>
            <span className="text-[21px]">PE</span>
            <span className="text-[16px]">(动)</span>
          </>
        }
        v2="11.7"
        c2="text-[#c0c0c0]"
      />
      <div className="mt-[5px] h-[2px] shrink-0 bg-[#9a0000]" />
      <FlowRow l="净流入额" bar="h-[12px] w-[36px] bg-[#ff3232]" v="1145" p="9%" c="text-[#ff3232]" />
      <FlowRow l="大宗流入" bar="h-[12px] w-[21px] bg-[#ff3232]" v="689.7" p="5%" c="text-[#ff3232]" />
      <FlowRow l="5日净流入额" bar="h-[10px] w-[2px] bg-[#00e600]" v="-84.0" p="-0%" c="text-[#00e600]" />
      <FlowRow l="5日大宗流入" bar="h-[11px] w-[12px] bg-[#ff3232]" v="427.5" p="1%" c="text-[#ff3232]" />
      <div className="mt-[2px] h-[2px] shrink-0 bg-[#9a0000]" />
      {trades.map((t, i) => (
        <div key={i} className="flex h-[27px] shrink-0 items-center pl-[3px] text-[21px] font-bold">
          <span className="w-[70px] text-[#c0c0c0]">{t[0]}</span>
          <span className="w-[85px] text-right text-[#ff3232]">{t[1]}</span>
          <span className={`w-[94px] text-right ${t[3]}`}>
            {t[2]}
            <span className="text-[22px] font-normal">万</span>
          </span>
          <span className={`ml-[17px] w-[19px] text-[22px] font-normal ${t[4] === "B" ? "text-[#ff3232]" : "text-[#00e600]"}`}>{t[4]}</span>
          <span className="flex-1 pr-[5px] text-right text-[#9a9a9a]">{t[5]}</span>
        </div>
      ))}
    </div>
  );
}

function Tile({ children }: { children?: ReactNode }) {
  return (
    <svg width="24" height="24" viewBox="0 0 24 24" className="font-['Liberation_Sans',sans-serif]">
      <rect x="1" y="1" width="22" height="22" fill="#fff" stroke="#4a8fe8" strokeWidth="1.6" />
      {children}
    </svg>
  );
}

function SideArrow({ d }: { d: string }) {
  return (
    <svg width="26" height="26" viewBox="0 0 26 26">
      <path d={d} fill="#fff" stroke="#5aa0f0" strokeWidth="1.6" strokeLinejoin="round" />
    </svg>
  );
}

const tileText = "fill-[#2a55c8] text-[15px]";

const sideIcons = [
  <SideArrow key="l" d="M2 13 L12 4 V9 H24 V17 H12 V22 Z" />,
  <SideArrow key="u" d="M13 2 L22 12 H17 V24 H9 V12 H4 Z" />,
  <SideArrow key="d" d="M13 24 L22 14 H17 V2 H9 V14 H4 Z" />,
  <Tile key="1">
    <path d="M4 5h6M4 8h6M4 11h6M4 14h6" stroke="#16a34a" strokeWidth="1.6" />
    <path d="M12 5h8M12 8h8M12 11h8" stroke="#e02424" strokeWidth="1.6" />
    <circle cx="17" cy="17" r="4.5" fill="#e5e5e5" stroke="#777" />
  </Tile>,
  <Tile key="2">
    <path d="M5 6h4M5 10h4M5 14h4M5 18h4" stroke="#e02424" strokeWidth="2" />
    <path d="M10.500 6h4M10.500 10h4M10.500 14h4M10.500 18h4" stroke="#16a34a" strokeWidth="2" />
    <path d="M16 6h3.500M16 10h3.500M16 14h3.500M16 18h3.500" stroke="#1e3fd8" strokeWidth="2" />
  </Tile>,
  <Tile key="3">
    <path d="M3 18 L8 13 L11 15 L16 9 L18 11 L22 6" fill="none" stroke="#e02424" strokeWidth="1.6" />
  </Tile>,
  <Tile key="4">
    <path d="M6 7v10M12 9v10M18 5v10" stroke="#333" />
    <rect x="3.500" y="9" width="5" height="6" fill="#e02424" />
    <rect x="9.500" y="10" width="5" height="7" fill="#16a34a" />
    <rect x="15.500" y="6" width="5" height="6" fill="#e02424" />
  </Tile>,
  <svg key="5" width="26" height="24" viewBox="0 0 26 24">
    <rect x="7" y="1" width="18" height="16" fill="#fff" stroke="#4a8fe8" strokeWidth="1.4" />
    <rect x="1" y="5" width="20" height="18" fill="#fff" stroke="#4a8fe8" strokeWidth="1.4" />
    <path d="M4 10h14M4 14h14M4 18h14" stroke="#888" strokeWidth="1.6" strokeDasharray="4 1" />
  </svg>,
  <Tile key="f10">
    <text x="12" y="18" textAnchor="middle" className={tileText}>
      F10
    </text>
  </Tile>,
  <Tile key="tree">
    <path d="M8 8v10h5M8 13h5" fill="none" stroke="#e08a1e" />
    <rect x="4" y="4" width="8" height="4" fill="#f4c04a" stroke="#e08a1e" />
    <rect x="12" y="10" width="8" height="4" fill="#f4c04a" stroke="#e08a1e" />
    <rect x="12" y="16" width="8" height="4" fill="#f4c04a" stroke="#e08a1e" />
  </Tile>,
  <Tile key="zi">
    <text x="12" y="19" textAnchor="middle" className="fill-[#f0843c] text-[17px] font-bold">
      自
    </text>
  </Tile>,
  <Tile key="f12">
    <text x="12" y="18" textAnchor="middle" className={tileText}>
      F12
    </text>
  </Tile>,
  <svg key="fx" width="26" height="26" viewBox="0 0 26 26" className="font-['Liberation_Serif',serif]">
    <path d="M6 2 H20 L24 6 V20 L20 24 H6 L2 20 V6 Z" fill="#fff" stroke="#3aa0a0" strokeWidth="1.8" />
    <text x="13" y="18" textAnchor="middle" className="fill-[#2a3fa8] text-[14px] italic">
      f(x)
    </text>
  </svg>,
  <Tile key="o">
    <circle cx="12" cy="12" r="5.500" fill="none" stroke="#3a78d8" strokeWidth="2" />
  </Tile>,
  "div",
  <Tile key="w">
    <path d="M3 9 L6 7 L9 10 L12 7 L15 10 L18 7 L21 9" fill="none" stroke="#e02424" strokeWidth="1.4" />
    <path d="M3 16 L6 14 L9 17 L12 14 L15 17 L18 14 L21 16" fill="none" stroke="#2a45d8" strokeWidth="1.4" />
  </Tile>,
  <span key="rsi" className="font-['Liberation_Sans',sans-serif] text-[18px] font-bold text-[#3048b8]">
    RSI
  </span>,
  <svg key="s" width="26" height="30" viewBox="0 0 26 30" className="font-['Liberation_Sans',sans-serif]">
    <path d="M13 1 L17 6 H9 Z" fill="#c83030" />
    <text x="14" y="26" textAnchor="middle" className="fill-[#999] text-[23px] font-bold">
      S
    </text>
    <text x="12.500" y="24.500" textAnchor="middle" className="fill-[#d83030] text-[23px] font-bold">
      S
    </text>
  </svg>,
  <svg key="move" width="26" height="26" viewBox="0 0 26 26">
    <path d="M13 1 L18 7 H15 V11 H19 V8 L25 13 L19 18 V15 H15 V19 H18 L13 25 L8 19 H11 V15 H7 V18 L1 13 L7 8 V11 H11 V7 H8 Z" fill="#1540c8" />
  </svg>,
  <svg key="pen" width="26" height="26" viewBox="0 0 26 26">
    <path d="M3 23 L5 16 L19 3 L24 7 L10 21 Z" fill="#f0a020" stroke="#8a6a30" />
    <path d="M19 3 L24 7 L22 9 L17 5 Z" fill="#e8a0a0" />
    <path d="M3 23 L5 17 L9 21 Z" fill="#333" />
  </svg>,
  "div",
  <Tile key="f5">
    <text x="12" y="18" textAnchor="middle" className={tileText}>
      F5
    </text>
  </Tile>,
  <Tile key="r">
    <path d="M5 12 A7 7 0 0 1 18 9 L20 6 V13 H13 L16 10 A5 5 0 0 0 8 12 Z" fill="#3cb043" />
    <path d="M19 12 A7 7 0 0 1 6 15 L4 18 V11 H11 L8 14 A5 5 0 0 0 16 12 Z" fill="#7cc84a" />
  </Tile>,
];

function SideBar() {
  const labels = ["1", "5", "15", "30", "60", "日", "周", "月", "N", "多", "季", "年"];
  return (
    <div className="flex w-[37px] flex-col items-center overflow-hidden bg-[#f0f0f0]">
      {sideIcons.map((icon, i) =>
        icon === "div" ? (
          <div key={i} className="my-[6px] h-[2px] w-[30px] shrink-0 bg-[#b8b8b8]" />
        ) : (
          <div key={i} className="flex h-[34.3px] shrink-0 items-center justify-center">
            {icon}
          </div>
        ),
      )}
      {labels.map((l) => (
        <span
          key={l}
          className={`flex h-[34.4px] w-full shrink-0 items-center justify-center text-[18px] text-[#24408c] ${
            l === "日" ? "border-l-2 border-t-2 border-[#c0c0c0] bg-[#fafafa]" : ""
          }`}
        >
          {l}
        </span>
      ))}
    </div>
  );
}

function StatusBar() {
  return (
    <div className="flex h-[37px] shrink-0 items-center whitespace-nowrap border-t-2 border-[#b0b0b0] bg-[#f0f0f0] text-[21px]">
      <span className="ml-[3px] h-[24px] w-[18px] rounded-[2px] border-2 border-[#e0a030] bg-[#f8d070]" />
      <span className="ml-[4px] text-[24px] text-[#222]">上证</span>
      <span className="ml-[7px] text-[#0a8a0a]">3156.14</span>
      <span className="ml-[24px] text-[#0a8a0a]">-9.33</span>
      <span className="ml-[25px] text-[#0a8a0a]">-0.29%</span>
      <span className="ml-[20px] font-bold text-[#222]">3663</span>
      <span className="text-[24px] text-[#222]">亿</span>
      <span className="ml-[26px] text-[24px] text-[#222]">深证</span>
      <span className="ml-[6px] text-[#0a8a0a]">11219.8</span>
      <span className="ml-[19px] text-[#0a8a0a]">-44.37</span>
      <span className="ml-[16px] text-[#0a8a0a]">-0.39%</span>
      <span className="ml-[20px] font-bold text-[#222]">4982</span>
      <span className="text-[24px] text-[#222]">亿</span>
      <span className="ml-[32px] text-[24px] text-[#222]">中小</span>
      <span className="ml-[5px] text-[#0a8a0a]">7489.80</span>
      <span className="ml-[18px] text-[#0a8a0a]">-31.21</span>
      <span className="ml-[20px] text-[#0a8a0a]">-0.41%</span>
    </div>
  );
}

function Watermark() {
  return (
    <div className="absolute left-[1080px] top-[1286px] flex h-[109px] w-[1080px] items-center overflow-hidden bg-[#7fadd9]">
      <span className="ml-[21px] w-[375px] shrink-0 whitespace-nowrap font-['Noto_Sans_CJK_SC',sans-serif] text-[75px] font-black leading-none text-[#15108c]">
        公式指标网
      </span>
      <svg width="104" height="104" viewBox="0 0 104 104" className="ml-[38px] shrink-0 font-['Liberation_Sans',sans-serif]">
        <path d="M5 52 A47 47 0 0 1 40 7" fill="none" stroke="#d9604a" strokeWidth="10" />
        <path d="M64 7 A47 47 0 0 1 99 52" fill="none" stroke="#d9604a" strokeWidth="10" />
        <path d="M99 60 A47 47 0 0 1 60 98" fill="none" stroke="#e8c945" strokeWidth="10" />
        <path d="M44 2 H60 V14 L68 18 V92 L60 102 H44 L36 92 V18 L44 14 Z" fill="#e8c945" />
        <circle cx="52" cy="9" r="3.500" fill="#7fadd9" />
        <path d="M36 36 H46 M58 36 H68 M46 24 V44 M58 24 V44 M36 56 H68 M52 62 V78 M36 72 H48 M56 72 H68" stroke="#c87a3a" strokeWidth="3.500" fill="none" />
        <defs>
          <path id="logo-arc" d="M4 62 A49 49 0 0 0 42 100" />
        </defs>
        <text className="fill-white text-[8px]">
          <textPath href="#logo-arc">www.9m8.cn</textPath>
        </text>
      </svg>
      <span className="ml-[38px] origin-left scale-x-[0.91] whitespace-nowrap font-['DejaVu_Serif',serif] text-[78px] font-bold leading-none tracking-[-1px] text-white">
        www.9m8.cn
      </span>
    </div>
  );
}

export default function App() {
  const tags: [string, string, string, boolean][] = [
    ["MA5: 5.51", "w-[103px]", "text-[#dcdcdc]", true],
    ["MA10: 5.48", "w-[112px]", "text-[#ffff00]", false],
    ["MA20: 5.47", "w-[113px]", "text-[#ff00ff]", true],
    ["MA60: 5.19", "w-[111px]", "text-[#00f000]", true],
    ["MA120: 5.00", "w-[123px]", "text-[#a8a8a8]", true],
    ["MA250: 4.90", "w-[112px]", "text-[#0000ff]", true],
  ];
  return (
    <div className="relative flex h-[1395px] w-[2160px] flex-col overflow-hidden bg-black font-['Liberation_Sans','Noto_Sans_CJK_SC',sans-serif]">
      <TitleBar />
      <div className="flex min-h-0 flex-1">
        <div className="flex w-[1787px] shrink-0 flex-col">
          <PeriodTabs />
          <div className="relative h-[714px] shrink-0">
            <MainChart />
            <div className="absolute left-[4px] top-[2px] flex h-[24px] items-center text-[17px] text-[#c0c0c0]">
              <span className="w-[129px] text-[18px]">南京医药(日线)</span>
              <RoundChevron />
              <div className="ml-[7px] flex">
                {tags.map(([t, w, c, up]) => (
                  <span key={t} className={`flex items-center ${w} ${c}`}>
                    <span className="whitespace-nowrap">{t}</span>
                    <span className="ml-[4px]">
                      <Arrow up={up} />
                    </span>
                  </span>
                ))}
              </div>
            </div>
            <div className="absolute left-[1660px] top-[7px] flex items-center gap-[10px]">
              <svg width="18" height="18" viewBox="0 0 18 18">
                <path d="M9 2 L16 9 L9 16 L2 9 Z" fill="none" stroke="#555" strokeWidth="1.4" />
              </svg>
              <PanelToggle />
            </div>
          </div>
          <div className="relative h-[501px] shrink-0 border-t-2 border-[#9a0000]">
            <SubChart />
            <div className="absolute left-[3px] top-[1px] flex h-[24px] items-center text-[17px] tracking-[0.25px]">
              <RoundChevron />
              <span className="ml-[6px] w-[115px] text-[18px] tracking-normal text-[#c0c0c0]">量化多空转换</span>
              <span className="flex w-[115px] items-center text-[#e00000]">
                <span className="whitespace-nowrap">多头: 72.59</span>
                <span className="ml-[4px]">
                  <Arrow up />
                </span>
              </span>
              <span className="flex items-center text-[#00e000]">
                <span className="whitespace-nowrap">空头: 72.77</span>
                <span className="ml-[4px]">
                  <Arrow up={false} />
                </span>
              </span>
            </div>
            {/* input method toolbar floating over the plot */}
            <div className="absolute left-[1282px] top-[121px] flex h-[26px] w-[158px] items-center gap-[1px] border-2 border-[#eeeeee] bg-[#6a6a6a] text-[#111] shadow-[1px_1px_0_#888]">
              <span className="flex h-full w-[20px] items-center justify-center bg-[#c8c8c8] font-['Liberation_Serif',serif] text-[18px] font-bold text-[#8a0000]">A</span>
              <span className="flex h-full w-[69px] items-center justify-center bg-[#c8c8c8] text-[16px]">极品五笔</span>
              <span className="flex h-full w-[18px] items-center justify-center bg-[#c8c8c8]">
                <svg width="12" height="14" viewBox="0 0 12 14">
                  <path d="M7 1 C10 5 9 9 2 11 C5 14 11 13 11 7 C11 4 9 2 7 1 Z" fill="#111" />
                </svg>
              </span>
              <span className="flex h-full w-[18px] items-center justify-center bg-[#c8c8c8] text-[12px]">·,</span>
              <span className="flex h-full flex-1 items-center justify-center bg-[#c8c8c8]">
                <span className="h-[14px] w-[16px] bg-[repeating-linear-gradient(0deg,#777_0_2px,#ddd_2px_4px)]" />
              </span>
            </div>
          </div>
          <DateAxis />
          <BottomTabs />
        </div>
        <QuotePanel />
        <SideBar />
      </div>
      <StatusBar />
      <Watermark />
    </div>
  );
}
